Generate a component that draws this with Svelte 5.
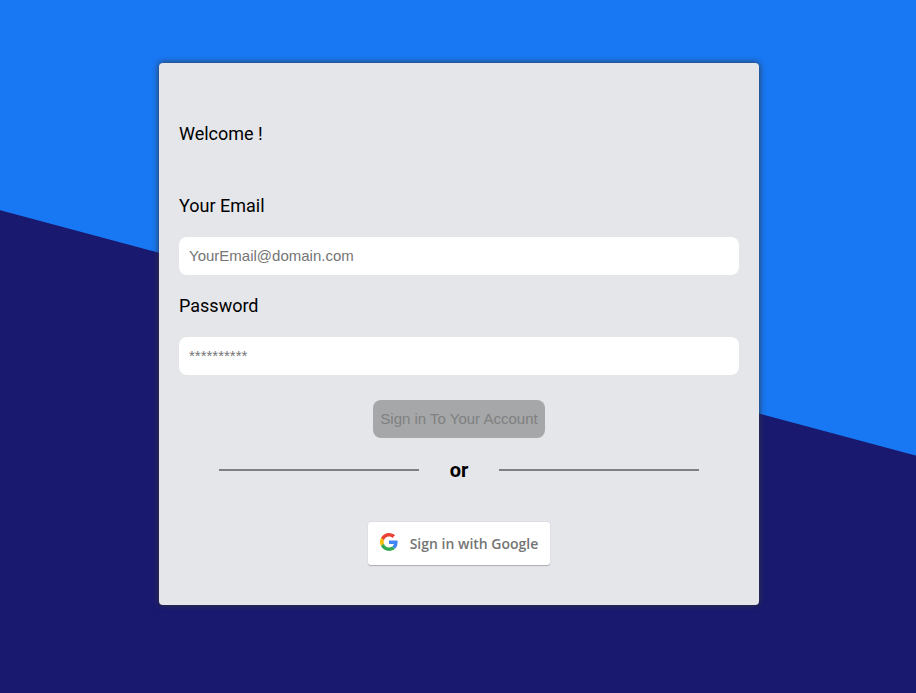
<script>
  let email = $state('');
  let password = $state('');
</script>

<main class="page">
  <section class="card">
    <h1>Welcome !</h1>

    <form onsubmit={(event) => event.preventDefault()}>
      <label for="email">Your Email</label>
      <input id="email" type="email" placeholder="YourEmail@domain.com" bind:value={email} />

      <label for="password">Password</label>
      <input id="password" type="password" placeholder="**********" bind:value={password} />

      <button class="submit" type="submit" disabled={!email || !password}>Sign in To Your Account</button>
    </form>

    <div class="divider">
      <span class="line"></span>
      <span class="or">or</span>
      <span class="line"></span>
    </div>

    <button class="google" type="button">
      <svg viewBox="0 0 48 48" width="18" height="18" aria-hidden="true">
        <path fill="#EA4335" d="M24 9.5c3.54 0 6.71 1.22 9.21 3.6l6.85-6.85C35.9 2.38 30.47 0 24 0 14.62 0 6.51 5.38 2.56 13.22l7.98 6.19C12.43 13.72 17.74 9.5 24 9.5z" />
        <path fill="#4285F4" d="M46.98 24.55c0-1.57-.15-3.09-.38-4.55H24v9.02h12.94c-.58 2.96-2.26 5.48-4.78 7.18l7.73 6c4.51-4.18 7.09-10.36 7.09-17.65z" />
        <path fill="#FBBC05" d="M10.53 28.59c-.48-1.45-.76-2.99-.76-4.59s.27-3.14.76-4.59l-7.98-6.19C.92 16.46 0 20.12 0 24c0 3.88.92 7.54 2.56 10.78l7.97-6.19z" />
        <path fill="#34A853" d="M24 48c6.48 0 11.93-2.13 15.89-5.81l-7.73-6c-2.15 1.45-4.92 2.3-8.16 2.3-6.26 0-11.57-4.22-13.47-9.91l-7.98 6.19C6.51 42.62 14.62 48 24 48z" />
      </svg>
      <span>Sign in with Google</span>
    </button>
  </section>
</main>

<style>
  .page {
    box-sizing: border-box;
    display: flex;
    justify-content: center;
    align-items: flex-start;
    min-height: 100vh;
    padding: 63px 16px 64px 18px;
    background: linear-gradient(15deg, #191970 51.4%, #1877f2 51.5%);
    font-family: Roboto, sans-serif;
    color: #000;
  }

  .card {
    box-sizing: border-box;
    display: flex;
    flex-direction: column;
    width: 100%;
    max-width: 600px;
    padding: 61px 20px 40px;
    border-radius: 4px;
    background: #e5e6ea;
    box-shadow: 0 0 6px #333;
  }

  h1 {
    margin: 0 0 52px;
    font-size: 18px;
    font-weight: 400;
    line-height: 20px;
  }

  form {
    display: flex;
    flex-direction: column;
  }

  label {
    margin-bottom: 21px;
    font-size: 18px;
    line-height: 20px;
  }

  input {
    box-sizing: border-box;
    width: 100%;
    height: 38px;
    margin: 0 0 21px;
    padding: 9px 10px 11px;
    border: 0;
    border-radius: 8px;
    background: #fff;
    font-family: "Liberation Sans", Arial, sans-serif;
    font-size: 15px;
    color: #000;
  }

  input::placeholder {
    color: #757575;
    opacity: 1;
  }

  .submit {
    align-self: center;
    height: 38px;
    margin: 4px 0 20px;
    padding: 0 7px 2px;
    border: 0;
    border-radius: 8px;
    background: #1877f2;
    font-family: "Liberation Sans", Arial, sans-serif;
    font-size: 15px;
    color: #fff;
  }

  .submit:disabled {
    background: #a6a7a9;
    color: #808080;
  }

  .divider {
    display: flex;
    align-items: center;
    margin: 0 40px;
  }

  .line {
    flex: 1;
    height: 2px;
    background: #808080;
  }

  .or {
    width: 80px;
    font-size: 20px;
    font-weight: 700;
    line-height: 24px;
    text-align: center;
  }

  .google {
    display: flex;
    align-self: center;
    align-items: center;
    gap: 12px;
    height: 43px;
    margin: 40px 0 0;
    padding: 0 12px;
    border: 0;
    border-radius: 3px;
    background: #fff;
    box-shadow: 0 -1px 0 rgba(0, 0, 0, 0.04), 0 1px 1px rgba(0, 0, 0, 0.25);
    font-family: "Open Sans", sans-serif;
    font-size: 14px;
    font-weight: 600;
    color: #757575;
  }

  .google svg {
    margin-bottom: 4px;
  }
</style>
